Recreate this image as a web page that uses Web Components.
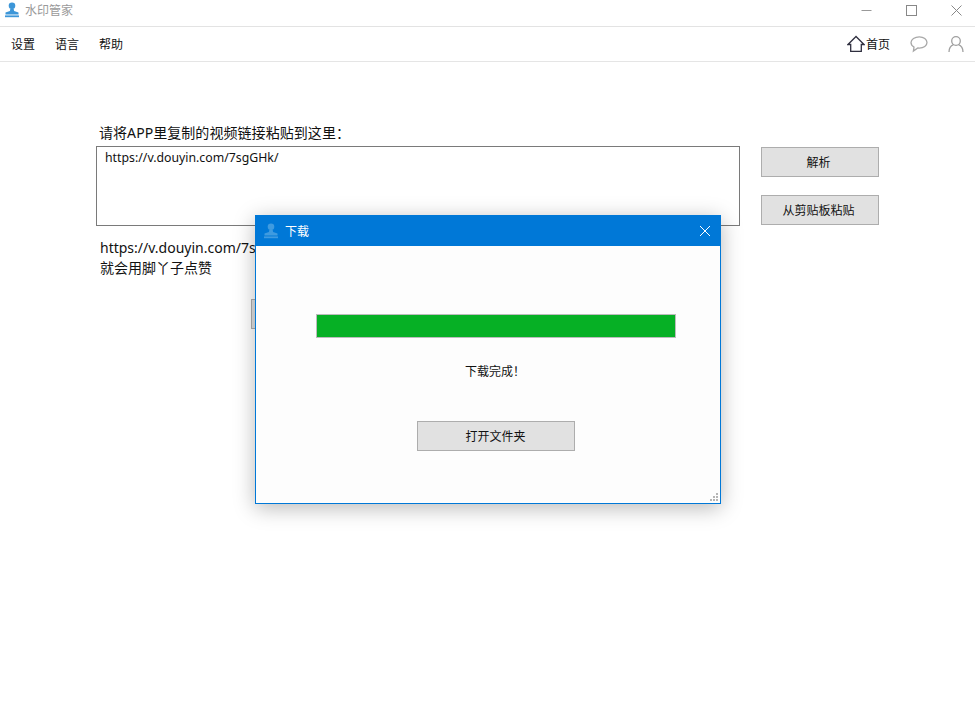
<!DOCTYPE html>
<html lang="zh-CN"><head><meta charset="utf-8">
<style>
html,body{margin:0;padding:0;background:#fff}
body{width:975px;height:721px;overflow:hidden;position:relative;font-family:"Noto Sans","Noto Sans CJK SC",sans-serif;color:#111}
</style></head><body>
<app-window>
  <title-bar slot="title"></title-bar>
  <menu-bar slot="menu"></menu-bar>
  <main-panel slot="main"></main-panel>
  <download-dialog slot="dialog"></download-dialog>
</app-window>
<template id="stamp"><svg viewBox="0 0 16 16" width="16" height="16"><circle cx="8" cy="3.800" r="3.300" fill="currentColor"/><path d="M6.400 6.500h3.200l.5 2.600 4.400 1.500v1.800H1.500v-1.800l4.400-1.500z" fill="currentColor"/><rect x="1" y="13.400" width="14" height="1.800" fill="currentColor"/></svg></template>
<script>
const stamp = document.getElementById('stamp').innerHTML;
const font = '"Noto Sans","Noto Sans CJK SC",sans-serif';
class Base extends HTMLElement{
  render(html){this.attachShadow({mode:'open'}).innerHTML=html}
}
class AppWindow extends Base{connectedCallback(){this.render(`<style>
:host{display:flex;flex-direction:column;width:975px;height:721px;position:relative}
</style><slot name="title"></slot><slot name="menu"></slot><slot name="main"></slot><slot name="dialog"></slot>`)}}
class TitleBar extends Base{connectedCallback(){this.render(`<style>
:host{display:flex;align-items:flex-start;height:26px;border-bottom:1px solid #e3e3e3;box-sizing:content-box;font:12px/20px ${font};color:#9a9a9a}
.ic{color:#3c96d8;margin-left:4px;display:flex;margin-top:2px}
.t{margin-left:5px;margin-top:1px}
.ctl{margin-left:auto;display:flex;gap:7px}
.ctl div{width:38px;height:20px;display:flex;align-items:center;justify-content:center}
</style><span class="ic">${stamp}</span><span class="t">水印管家</span>
<div class="ctl">
<div><svg width="11" height="11" viewBox="0 0 11 11"><path d="M0.500 5.500h10" stroke="#999" fill="none"/></svg></div>
<div><svg width="11" height="11" viewBox="0 0 11 11"><rect x="0.500" y="0.500" width="10" height="10" stroke="#888" fill="none"/></svg></div>
<div><svg width="11" height="11" viewBox="0 0 11 11"><path d="M.500.500l10 10M10.500.500l-10 10" stroke="#888" fill="none"/></svg></div>
</div>`)}}
class MenuBar extends Base{connectedCallback(){this.render(`<style>
:host{display:flex;align-items:center;height:34px;border-bottom:1px solid #e5e5e5;font:12px ${font};color:#111;padding:0 8px 0 11px}
nav{display:flex;gap:20px}
.r{margin-left:auto;display:flex;align-items:center}
.home{display:flex;align-items:center;gap:1px;margin-right:20px}
.home span{margin-top:-1px}
.c{margin-right:20px;display:flex}.u{margin-right:3px;display:flex}
</style><nav><span>设置</span><span>语言</span><span>帮助</span></nav>
<div class="r"><div class="home"><svg width="18" height="18" viewBox="0 0 18 18"><path d="M9 1.500L1 9.500h2.700v6.800h10.600V9.500H17z" fill="none" stroke="#2f2f3f" stroke-width="1.300"/></svg><span>首页</span></div>
<span class="c"><svg width="18" height="18" viewBox="0 0 18 18"><path d="M9.300 1.800C4.800 1.800 1 4.300 1 7.600c0 1.900 1.200 3.500 3 4.500l-.6 4 4.400-3.100c.5.100 1 .1 1.500.1 4.400 0 7.700-2.400 7.700-5.500S13.700 1.800 9.300 1.800z" fill="none" stroke="#a8a8a8" stroke-width="1.300"/></svg></span>
<span class="u"><svg width="16" height="18" viewBox="0 0 16 18"><circle cx="8" cy="6" r="4.300" fill="none" stroke="#a0a0a0" stroke-width="1.300"/><path d="M1 17c0-4 2.500-6.500 4.500-7.300M15 17c0-4-2.500-6.500-4.500-7.300" fill="none" stroke="#a0a0a0" stroke-width="1.300"/></svg></span></div>`)}}
class UiButton extends Base{connectedCallback(){this.render(`<style>
:host{display:flex;align-items:center;justify-content:center;box-sizing:border-box;height:30px;background:#e1e1e1;border:1px solid #adadad;font:12px ${font};color:#111;padding:0 3px 1px 0}
</style><slot></slot>`)}}
class MainPanel extends Base{connectedCallback(){this.render(`<style>
:host{display:block;padding:61px 0 0 96px;font-family:${font};color:#111}
.lab{font-size:14px;line-height:20px;padding-left:3px;height:23px;letter-spacing:.06px}
.row{display:flex;align-items:flex-start}
.ta{box-sizing:border-box;width:644px;height:80px;border:1px solid #7a7a7a;padding:2px 8px;font-size:12.300px;line-height:18px;color:#111}
.btns{margin:1px 0 0 21px;display:flex;flex-direction:column;gap:18px;width:118px}
.res{font-size:14px;line-height:20px;padding:12px 0 0 4px}
.res2{margin:21px 0 0 155px;width:60px}
</style><div class="lab">请将APP里复制的视频链接粘贴到这里：</div>
<div class="row"><div class="ta">https://v.douyin.com/7sgGHk/</div>
<div class="btns"><ui-button>解析</ui-button><ui-button>从剪贴板粘贴</ui-button></div></div>
<div class="res">https://v.douyin.com/7sgGHk/<br>就会用脚丫子点赞</div>
<ui-button class="res2">下载</ui-button>`)}}
class DownloadDialog extends Base{connectedCallback(){this.render(`<style>
:host{position:absolute;left:255px;top:215px;width:466px;height:289px;box-sizing:border-box;border:1px solid #0078d7;background:#fdfdfd;box-shadow:0 4px 20px rgba(0,0,0,.28);display:flex;flex-direction:column;font:12px ${font};color:#111}
.head{height:30px;background:#0078d7;color:#fff;display:flex;align-items:center;padding:0 9px 0 7px;flex:none}
.head .ic{color:#3f9be0;display:flex;margin-right:6px}
.x{margin-left:auto;display:flex}
.body{flex:1;display:flex;flex-direction:column;align-items:center;padding:68px 0 0 16px}
.bar{box-sizing:border-box;width:360px;height:24px;background:#06b025;border:1px solid #bcbcbc}
.msg{margin:25px 2px 0 0;line-height:18px}
ui-button{width:158px;margin-top:40px;padding:0 1px 0 0}
.grip{position:absolute;right:1px;bottom:1px}
</style><div class="head"><span class="ic">${stamp}</span><span>下载</span><span class="x"><svg width="12" height="12" viewBox="0 0 12 12"><path d="M1 1l10 10M11 1L1 11" stroke="#fff" fill="none"/></svg></span></div>
<div class="body"><div class="bar"></div><div class="msg">下载完成！</div><ui-button>打开文件夹</ui-button></div>
<svg class="grip" width="9" height="9" viewBox="0 0 9 9" fill="#b5b5b5"><rect x="6" y="0" width="2" height="2"/><rect x="3" y="3" width="2" height="2"/><rect x="6" y="3" width="2" height="2"/><rect x="0" y="6" width="2" height="2"/><rect x="3" y="6" width="2" height="2"/><rect x="6" y="6" width="2" height="2"/></svg>`)}}
customElements.define('ui-button',UiButton);
customElements.define('app-window',AppWindow);
customElements.define('title-bar',TitleBar);
customElements.define('menu-bar',MenuBar);
customElements.define('main-panel',MainPanel);
customElements.define('download-dialog',DownloadDialog);
</script></body></html>
